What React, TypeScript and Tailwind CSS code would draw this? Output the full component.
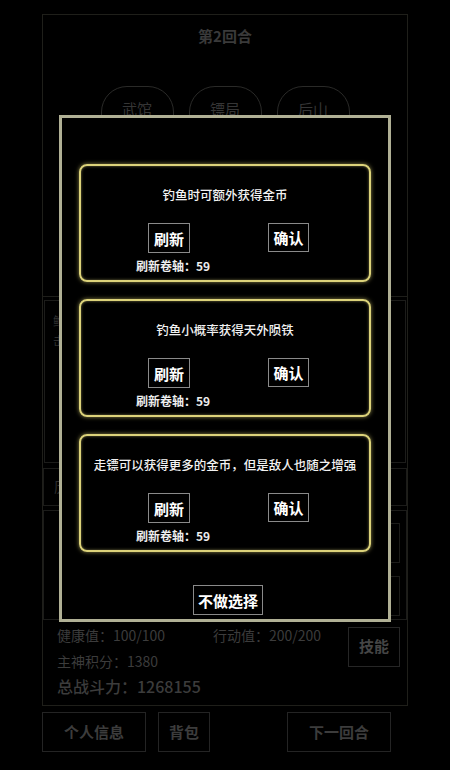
import React from 'react';

const font = { fontFamily: '"Noto Sans CJK SC", "Noto Sans", sans-serif' };

const choices = [
    '钓鱼时可额外获得金币',
    '钓鱼小概率获得天外陨铁',
    '走镖可以获得更多的金币，但是敌人也随之增强',
];

function ChoiceCard({ text }: { text: string }) {
    return (
        <div className="h-[118px] rounded-[8px] border-2 border-[#dcd27a] shadow-[0_0_4px_rgba(230,220,120,0.6),inset_0_0_3px_rgba(240,230,140,0.5)] pt-[20px]">
            <div className="text-center text-[12.5px] leading-[18px] font-medium text-[#f2f2f2]">{text}</div>
            <div className="flex pl-[67px] mt-[19px] gap-[78px]">
                <button className="w-[42px] h-[30px] border border-[#8a8a8a] text-[15px] font-bold text-white leading-none">刷新</button>
                <button className="w-[41px] h-[29px] border border-[#8a8a8a] text-[15px] font-bold text-white leading-none">确认</button>
            </div>
            <div className="pl-[55px] mt-[6px] text-[12px] leading-[14px] font-bold text-[#ededed]">刷新卷轴：59</div>
        </div>
    );
}

export default function App() {
    return (
        <div className="relative w-[450px] h-[770px] bg-black overflow-hidden" style={font}>
            {/* dimmed game screen */}
            <div className="pt-[14px] px-[42px]">
                <div className="h-[692px] border border-[#1f1f1a] flex flex-col">
                    <div className="text-center text-[15px] font-bold text-[#3a3a3a] mt-[10px]">第2回合</div>
                    <div className="flex justify-center gap-[15px] mt-[38px]">
                        {['武馆', '镖局', '后山'].map((t) => (
                            <div key={t} className="w-[73px] h-[48px] rounded-t-[26px] rounded-b-[14px] border border-[#2a2a28] flex items-center justify-center text-[15px] text-[#353535]">
                                {t}
                            </div>
                        ))}
                    </div>
                    <div className="mt-[162px] border-t border-[#1e1e1a]" />
                    <div className="mx-[1px] mt-[3px] h-[163px] border border-[#1c1c1a] px-[8px] pt-[10px] text-[12px] leading-[20px] text-[#2e2e2e]">
                        <div>鲍</div>
                        <div>击</div>
                    </div>
                    <div className="mt-[5px] h-[38px] border border-[#1c1c1a] px-[10px] flex items-center text-[14px] text-[#2e2e2e]">历练</div>
                    <div className="mt-[4px] h-[110px] border border-[#1c1c1a] flex flex-col items-end gap-[13px] pt-[12px] pr-[6px]">
                        <div className="w-[12px] h-[40px] border border-[#1c1c1a]" />
                        <div className="w-[12px] h-[40px] border border-[#1c1c1a]" />
                    </div>
                    <div className="flex mt-[5px] pl-[14px] pr-[7px]">
                        <div className="flex-1 text-[#3c3c3c]">
                            <div className="flex text-[14px] leading-[20px]">
                                <span className="w-[156px]">健康值：100/100</span>
                                <span>行动值：200/200</span>
                            </div>
                            <div className="text-[14px] leading-[20px] mt-[6px]">主神积分：1380</div>
                            <div className="text-[16px] leading-[20px] mt-[5px] font-medium">总战斗力：1268155</div>
                        </div>
                        <div className="w-[52px] h-[40px] mt-[2px] border border-[#262626] flex items-center justify-center text-[15px] font-bold text-[#454545]">技能</div>
                    </div>
                </div>
                <div className="flex mt-[6px] items-center">
                    <div className="w-[104px] h-[40px] border border-[#242424] flex items-center justify-center text-[15px] font-bold text-[#3c3c3c]">个人信息</div>
                    <div className="w-[52px] h-[40px] ml-[12px] border border-[#242424] flex items-center justify-center text-[15px] font-bold text-[#3c3c3c]">背包</div>
                    <div className="w-[104px] h-[40px] ml-[77px] border border-[#242424] flex items-center justify-center text-[15px] font-bold text-[#3c3c3c]">下一回合</div>
                </div>
            </div>

            {/* choice modal */}
            <div className="absolute left-[59px] top-[115px] w-[332px] h-[507px] bg-black border-[3px] border-[#b0b095] px-[17px] pt-[46px] flex flex-col">
                <div className="flex flex-col gap-[17px]">
                    {choices.map((c) => (
                        <ChoiceCard key={c} text={c} />
                    ))}
                </div>
                <div className="flex justify-center mt-[33px] pl-[6px]">
                    <button className="w-[70px] h-[30px] border border-[#8a8a8a] text-[15px] font-bold text-white leading-none">不做选择</button>
                </div>
            </div>
        </div>
    );
}
